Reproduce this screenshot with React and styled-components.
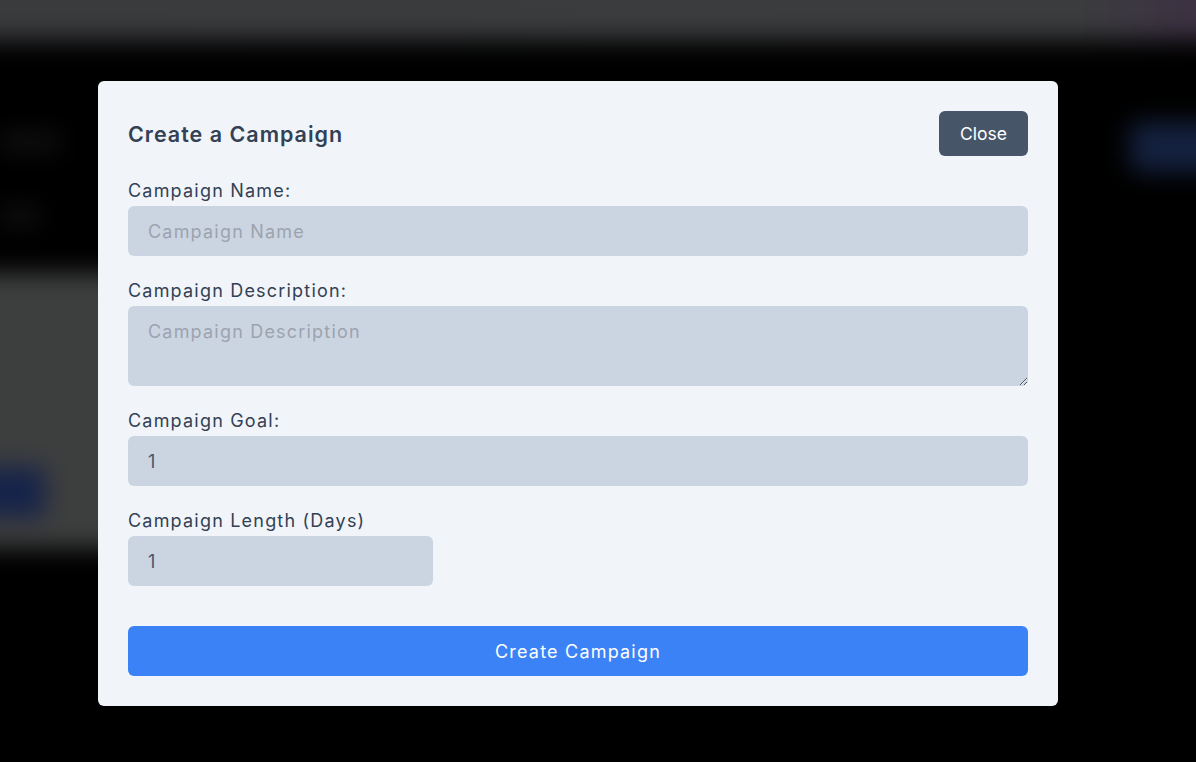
import React from "react";
import styled, { createGlobalStyle } from "styled-components";

const Global = createGlobalStyle`
  html, body { margin: 0; padding: 0; background: #000; }
  body { font-family: Inter, "Liberation Sans", sans-serif; overflow: hidden; }
  * { box-sizing: border-box; }
`;

const Stage = styled.div`
  position: relative;
  width: 1196px;
  height: 762px;
  overflow: hidden;
  background: #000;
`;

/* blurred page behind the dialog */
const BackPage = styled.div`
  position: absolute;
  inset: -40px;
  filter: blur(12px);
  display: flex;
  flex-direction: column;
`;

const BackHeader = styled.div`
  height: 80px;
  background: linear-gradient(90deg, #3a3b3d 0%, #3b3c3e 88%, #3d2e44 100%);
  flex-shrink: 0;
`;

const BackMain = styled.div`
  flex: 1;
  display: flex;
  justify-content: space-between;
  padding-top: 80px;
`;

const BackLeft = styled.div`
  width: 260px;
  display: flex;
  flex-direction: column;
`;

const BackText = styled.div`
  margin-left: 40px;
  width: ${(p) => p.$w}px;
  height: 14px;
  margin-top: ${(p) => p.$mt}px;
  background: #161616;
  border-radius: 4px;
`;

const BackPanel = styled.div`
  margin-top: 50px;
  height: 275px;
  background: #3d3e3e;
  display: flex;
  flex-direction: column;
  justify-content: flex-end;
  padding-bottom: 31px;
`;

const BackBlueBtn = styled.div`
  width: 85px;
  height: 50px;
  background: #16234a;
  border-radius: 6px;
`;

const BackRight = styled.div`
  width: 136px;
  padding-top: 2px;
`;

const BackRightBtn = styled.div`
  width: 110px;
  height: 50px;
  background: #14213f;
  border-radius: 8px;
  margin-left: 30px;
`;

const Overlay = styled.div`
  position: absolute;
  inset: 0;
  display: flex;
  justify-content: flex-start;
  align-items: flex-start;
  padding: 81px 0 0 98px;
`;

const Modal = styled.form`
  width: 960px;
  background: #f1f5f9;
  border-radius: 6px;
  padding: 30px;
  display: flex;
  flex-direction: column;
`;

const HeaderRow = styled.div`
  display: flex;
  justify-content: space-between;
  align-items: center;
  height: 45px;
`;

const Title = styled.h2`
  margin: 0;
  font-size: 21.5px;
  font-weight: 600;
  color: #334155;
  letter-spacing: 1px;
`;

const CloseButton = styled.button`
  width: 89px;
  height: 45px;
  border: none;
  border-radius: 6px;
  background: #475569;
  color: #ffffff;
  font-family: Inter, "Liberation Sans", sans-serif;
  font-size: 17.5px;
  cursor: pointer;
`;

const Field = styled.div`
  display: flex;
  flex-direction: column;
  margin-top: 21px;
`;

const Label = styled.label`
  font-size: 18px;
  line-height: 28px;
  letter-spacing: 1.2px;
  color: #334155;
  margin-bottom: 1px;
`;

const inputStyles = `
  border: none;
  outline: none;
  border-radius: 6px;
  background: #cbd5e1;
  color: #475569;
  font-family: Inter, "Liberation Sans", sans-serif;
  font-size: 18px;
  letter-spacing: 1.2px;
  padding: 0 20px;
  &::placeholder { color: #9ca3af; }
`;

const Input = styled.input`
  ${inputStyles}
  height: 50px;
  width: ${(p) => (p.$narrow ? "305px" : "100%")};
`;

const TextArea = styled.textarea`
  ${inputStyles}
  height: 80px;
  width: 100%;
  padding-top: 14px;
  line-height: 24px;
  resize: vertical;
`;

const SubmitButton = styled.button`
  margin-top: 40px;
  height: 50px;
  width: 100%;
  border: none;
  border-radius: 6px;
  background: #3b82f6;
  color: #ffffff;
  font-family: Inter, "Liberation Sans", sans-serif;
  font-size: 18px;
  letter-spacing: 1.2px;
  cursor: pointer;
`;

export default function App() {
  return (
    <Stage>
      <Global />
      <BackPage>
        <BackHeader />
        <BackMain>
          <BackLeft>
            <BackText $w={60} $mt={15} />
            <BackText $w={40} $mt={60} />
            <BackPanel>
              <BackBlueBtn />
            </BackPanel>
          </BackLeft>
          <BackRight>
            <BackRightBtn />
          </BackRight>
        </BackMain>
      </BackPage>
      <Overlay>
        <Modal onSubmit={(e) => e.preventDefault()}>
          <HeaderRow>
            <Title>Create a Campaign</Title>
            <CloseButton type="button">Close</CloseButton>
          </HeaderRow>
          <Field>
            <Label>Campaign Name:</Label>
            <Input placeholder="Campaign Name" />
          </Field>
          <Field>
            <Label>Campaign Description:</Label>
            <TextArea placeholder="Campaign Description" />
          </Field>
          <Field>
            <Label>Campaign Goal:</Label>
            <Input type="number" defaultValue={1} />
          </Field>
          <Field>
            <Label>Campaign Length (Days)</Label>
            <Input type="number" $narrow defaultValue={1} />
          </Field>
          <SubmitButton type="submit">Create Campaign</SubmitButton>
        </Modal>
      </Overlay>
    </Stage>
  );
}
